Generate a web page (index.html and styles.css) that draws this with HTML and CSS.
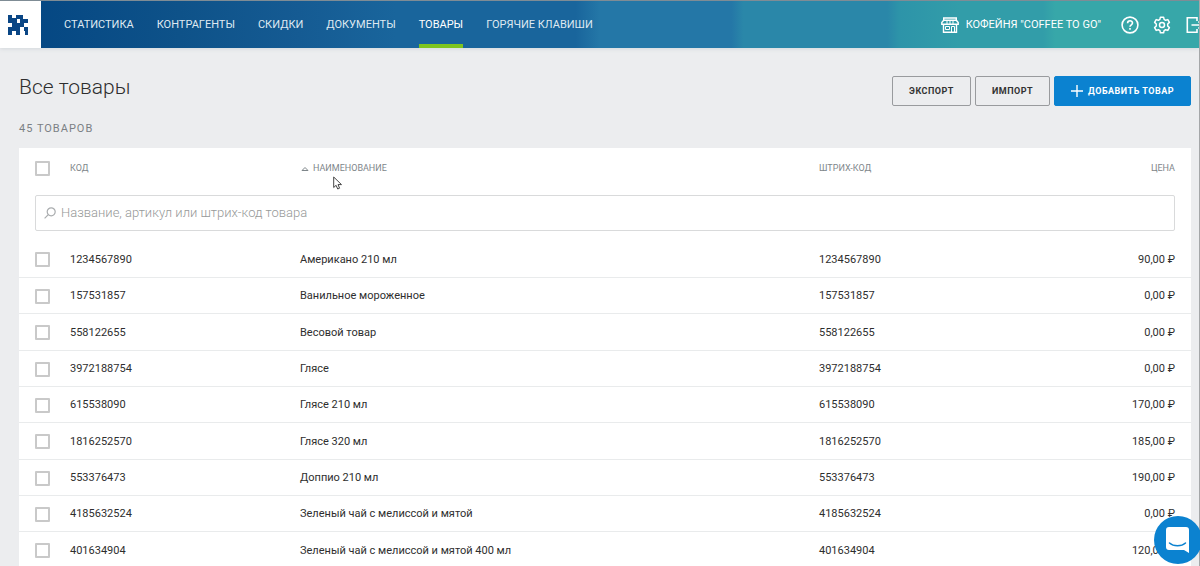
FILE: index.html
```html
<!DOCTYPE html>
<html lang="ru">
<head>
<meta charset="utf-8">
<title>Все товары</title>
<link rel="stylesheet" href="styles.css">
</head>
<body>
<header class="topbar">
  <a class="logo" href="#" aria-label="Главная">
    <svg width="20" height="20" viewBox="0 0 20 20" fill="#0a4685" shape-rendering="crispEdges"><path d="M0 0h4v3h4V0h7v4h5v4h-4v4h-4v4H4v4H0v-8h4V8H0V4zM9 4v4h3V4zM8 16h4v4H8zM16 12h4v8h-3v-4h-1z"/></svg>
  </a>
  <nav class="nav">
    <a href="#">СТАТИСТИКА</a>
    <a href="#">КОНТРАГЕНТЫ</a>
    <a href="#">СКИДКИ</a>
    <a href="#">ДОКУМЕНТЫ</a>
    <a href="#" class="active">ТОВАРЫ</a>
    <a href="#">ГОРЯЧИЕ КЛАВИШИ</a>
  </nav>
  <div class="tools">
    <a class="shop" href="#">
      <svg width="18" height="16" viewBox="0 0 18 16" fill="none" stroke="currentColor" stroke-width="1.400"><path d="M2.700 1h12.600v2.200H2.700zM2.700 3.200L.8 5.500v1.700h16.400V5.500l-1.900-2.300M2.500 7.200v8.100h13v-8.100"/><path stroke-width="1" d="M6 3.500v3.500M9 3.500v3.500M12 3.500v3.500M4.500 9.500h4v3h-4zM10.500 15V9.500h3V15"/></svg>
      <span>КОФЕЙНЯ "COFFEE TO GO"</span>
    </a>
    <button class="tool" aria-label="Помощь">
      <svg width="18" height="18" viewBox="0 0 18 18" fill="none" stroke="currentColor" stroke-width="1.600"><circle cx="9" cy="9" r="7.900"/><path d="M6.600 7.200c0-3.200 4.900-3.100 4.900-.2 0 1.800-2.500 1.800-2.500 3.700M9 12v1.700"/></svg>
    </button>
    <button class="tool" aria-label="Настройки">
      <svg width="18" height="18" viewBox="0 0 18 18" fill="none" stroke="currentColor" stroke-width="1.500" stroke-linejoin="round"><path d="M7.400 1.200h3.200l.5 2.200 1.500.9 2.200-.7 1.600 2.800-1.700 1.600v2l1.700 1.600-1.600 2.800-2.200-.7-1.500.9-.5 2.200H7.400l-.5-2.200-1.500-.9-2.200.7-1.600-2.800L3.300 10V8L1.600 6.400l1.600-2.800 2.200.7 1.500-.9z"/><circle cx="9" cy="9" r="2.500"/></svg>
    </button>
    <button class="tool" aria-label="Выход">
      <svg width="18" height="18" viewBox="0 0 18 18" fill="none" stroke="currentColor" stroke-width="1.600"><path d="M12 5V1.800H2.300v14.400H12V13M6.500 9H17M13.500 5.500L17 9l-3.500 3.500"/></svg>
    </button>
  </div>
</header>

<main class="page">
  <div class="heading">
    <h1>Все товары</h1>
    <div class="actions">
      <button class="btn">ЭКСПОРТ</button>
      <button class="btn">ИМПОРТ</button>
      <button class="btn primary"><svg width="12" height="12" viewBox="0 0 12 12" stroke="currentColor" stroke-width="1.400"><path d="M6 0v12M0 6h12"/></svg>ДОБАВИТЬ ТОВАР</button>
    </div>
  </div>
  <p class="count">45 ТОВАРОВ</p>

  <table class="goods">
    <colgroup><col class="c-check"><col class="c-code"><col><col class="c-barcode"><col class="c-price"></colgroup>
    <thead>
      <tr class="titles">
        <th class="pick"><input type="checkbox" aria-label="Выбрать все"></th>
        <th>КОД</th>
        <th class="sorted"><svg width="8" height="6" viewBox="0 0 8 6" fill="none" stroke="currentColor"><path d="M1 4.500L4 1.500l3 3z"/></svg>НАИМЕНОВАНИЕ</th>
        <th>ШТРИХ-КОД</th>
        <th class="price">ЦЕНА</th>
      </tr>
      <tr>
        <td class="search-cell" colspan="5">
          <label class="search">
            <svg width="12" height="12" viewBox="0 0 12 12" fill="none" stroke="currentColor" stroke-width="1.200"><circle cx="7.200" cy="4.800" r="4"/><path d="M4.300 7.700L.6 11.400"/></svg>
            <input type="text" aria-label="Поиск товара" placeholder="Название, артикул или штрих-код товара">
          </label>
        </td>
      </tr>
    </thead>
    <tbody>
      <tr><td class="pick"><input type="checkbox" aria-label="Американо 210 мл"></td><td>1234567890</td><td>Американо 210 мл</td><td>1234567890</td><td class="price">90,00 ₽</td></tr>
      <tr><td class="pick"><input type="checkbox" aria-label="Ванильное мороженное"></td><td>157531857</td><td>Ванильное мороженное</td><td>157531857</td><td class="price">0,00 ₽</td></tr>
      <tr><td class="pick"><input type="checkbox" aria-label="Весовой товар"></td><td>558122655</td><td>Весовой товар</td><td>558122655</td><td class="price">0,00 ₽</td></tr>
      <tr><td class="pick"><input type="checkbox" aria-label="Глясе"></td><td>3972188754</td><td>Глясе</td><td>3972188754</td><td class="price">0,00 ₽</td></tr>
      <tr><td class="pick"><input type="checkbox" aria-label="Глясе 210 мл"></td><td>615538090</td><td>Глясе 210 мл</td><td>615538090</td><td class="price">170,00 ₽</td></tr>
      <tr><td class="pick"><input type="checkbox" aria-label="Глясе 320 мл"></td><td>1816252570</td><td>Глясе 320 мл</td><td>1816252570</td><td class="price">185,00 ₽</td></tr>
      <tr><td class="pick"><input type="checkbox" aria-label="Доппио 210 мл"></td><td>553376473</td><td>Доппио 210 мл</td><td>553376473</td><td class="price">190,00 ₽</td></tr>
      <tr><td class="pick"><input type="checkbox" aria-label="Зеленый чай с мелиссой и мятой"></td><td>4185632524</td><td>Зеленый чай с мелиссой и мятой</td><td>4185632524</td><td class="price">0,00 ₽</td></tr>
      <tr><td class="pick"><input type="checkbox" aria-label="Зеленый чай с мелиссой и мятой 400 мл"></td><td>401634904</td><td>Зеленый чай с мелиссой и мятой 400 мл</td><td>401634904</td><td class="price">120,00 ₽</td></tr>
    </tbody>
  </table>
</main>

<button class="chat" aria-label="Открыть чат">
  <svg width="24" height="26" viewBox="0 0 24 26"><path fill="#fff" d="M3 0h17a3 3 0 0 1 3 3v23l-5-3H3a3 3 0 0 1-3-3V3a3 3 0 0 1 3-3z"/><path d="M3.500 16c4 3.800 12 3.800 16 0" fill="none" stroke="#0b82d0" stroke-width="1.500" stroke-linecap="round"/></svg>
</button>
<svg class="cursor" width="10" height="14" viewBox="0 0 10 14" aria-hidden="true"><path d="M.7 1v10.500l2.400-2.200 1.600 3.700 1.900-.8L5 8.600h3.500z" fill="#fff" stroke="#444"/></svg>
</body>
</html>
```
FILE: styles.css
```css
* { box-sizing: border-box; }

body {
  margin: 0;
  height: 100vh;
  overflow: hidden;
  background: #ecedef;
  border-right: 1px solid #a5a7a9;
  color: #2e2e2e;
  font: 11px/20px Roboto, "Noto Sans", sans-serif;
}

button { font: inherit; cursor: pointer; }
a { color: inherit; text-decoration: none; }
svg { flex: none; }

.topbar {
  display: flex;
  height: 48px;
  border-top: 1px solid #7f8c95;
  background: linear-gradient(90deg, #034582 0, #0e5289 15%, #155b93 25%, #19659c 33%, #19659c 48%, #2477a7 50%, #2477a7 61%, #2a87a9 62%, #2a87a9 74%, #2d94a9 75%, #329da9 80%, #329da9 87%, #37a7a9 88%);
  box-shadow: 0 1px 4px #d4d8dc;
  color: #fff;
}

.logo {
  display: flex;
  align-items: center;
  width: 41px;
  padding-left: 8px;
  background: #fff;
}

.nav { display: flex; gap: 23px; padding-left: 23px; }

.nav a {
  padding-top: 14px;
  border-bottom: 4px solid transparent;
  color: #dfe9f1;
  white-space: nowrap;
}

.nav .active { border-color: #7dc41f; color: #fff; }

.tools { display: flex; gap: 14px; margin-left: auto; align-items: center; }
.shop { display: flex; align-items: center; gap: 7px; margin-right: 6px; white-space: nowrap; }

.tool {
  display: flex;
  width: 18px;
  padding: 0;
  border: 0;
  background: none;
  color: #fff;
}

.tool:last-child { width: 14px; overflow: hidden; }

.page { padding: 28px 8px 0 19px; }

.heading { display: flex; justify-content: space-between; }

h1 { margin: 0; font-size: 21px; line-height: 22px; font-weight: 300; }

.actions { display: flex; gap: 4px; }

.btn {
  display: flex;
  align-items: center;
  gap: 5px;
  height: 30px;
  padding: 0 16px;
  border: 1px solid #999b9e;
  border-radius: 2px;
  background: none;
  color: #333;
  font-size: 9px;
  font-weight: 700;
  letter-spacing: 0.5px;
}

.primary { border-color: #0b82d0; background: #0b82d0; color: #fff; }

.count { margin: 13px 0 9px; color: #7b8084; letter-spacing: 1px; }

.goods {
  width: 100%;
  border-collapse: collapse;
  table-layout: fixed;
  background: #fff;
}

.c-check { width: 51px; }
.c-code { width: 230px; }
.c-barcode { width: 200px; }
.c-price { width: 172px; }

th, td { padding: 0; text-align: left; white-space: nowrap; }
th { color: #7e868a; font-size: 9px; font-weight: 400; }

.titles { height: 40px; }
.sorted svg { margin: 0 4px 0 1px; vertical-align: middle; }

tbody tr { height: 36px; border-bottom: 1px solid #e9ebec; }
tbody tr:nth-child(3n) { height: 37px; }
tbody td { padding-top: 2px; }

.goods .price { padding-right: 16px; text-align: right; }
.goods .pick { padding-left: 16px; }

.pick input {
  appearance: none;
  display: block;
  width: 15px;
  height: 15px;
  margin: 0;
  border: 2px solid #c9c9c9;
  border-radius: 1px;
  background: #fff;
}

.search-cell { padding: 7px 16px 10px; }

.search {
  display: flex;
  align-items: center;
  gap: 5px;
  height: 36px;
  padding: 0 8px;
  border: 1px solid #d9dadb;
  border-radius: 2px;
  color: #a9acae;
}

.search input {
  flex: 1;
  min-width: 0;
  padding: 0;
  border: 0;
  outline: 0;
  background: none;
  font: inherit;
  font-size: 13px;
  font-weight: 300;
}

.search input::placeholder { color: #969998; }

.chat {
  position: fixed;
  right: -2px;
  bottom: 2px;
  display: flex;
  align-items: center;
  justify-content: center;
  width: 48px;
  height: 48px;
  padding: 0;
  border: 0;
  border-radius: 50%;
  background: #0b82d0;
}

.cursor { position: absolute; left: 333px; top: 176px; }
```
